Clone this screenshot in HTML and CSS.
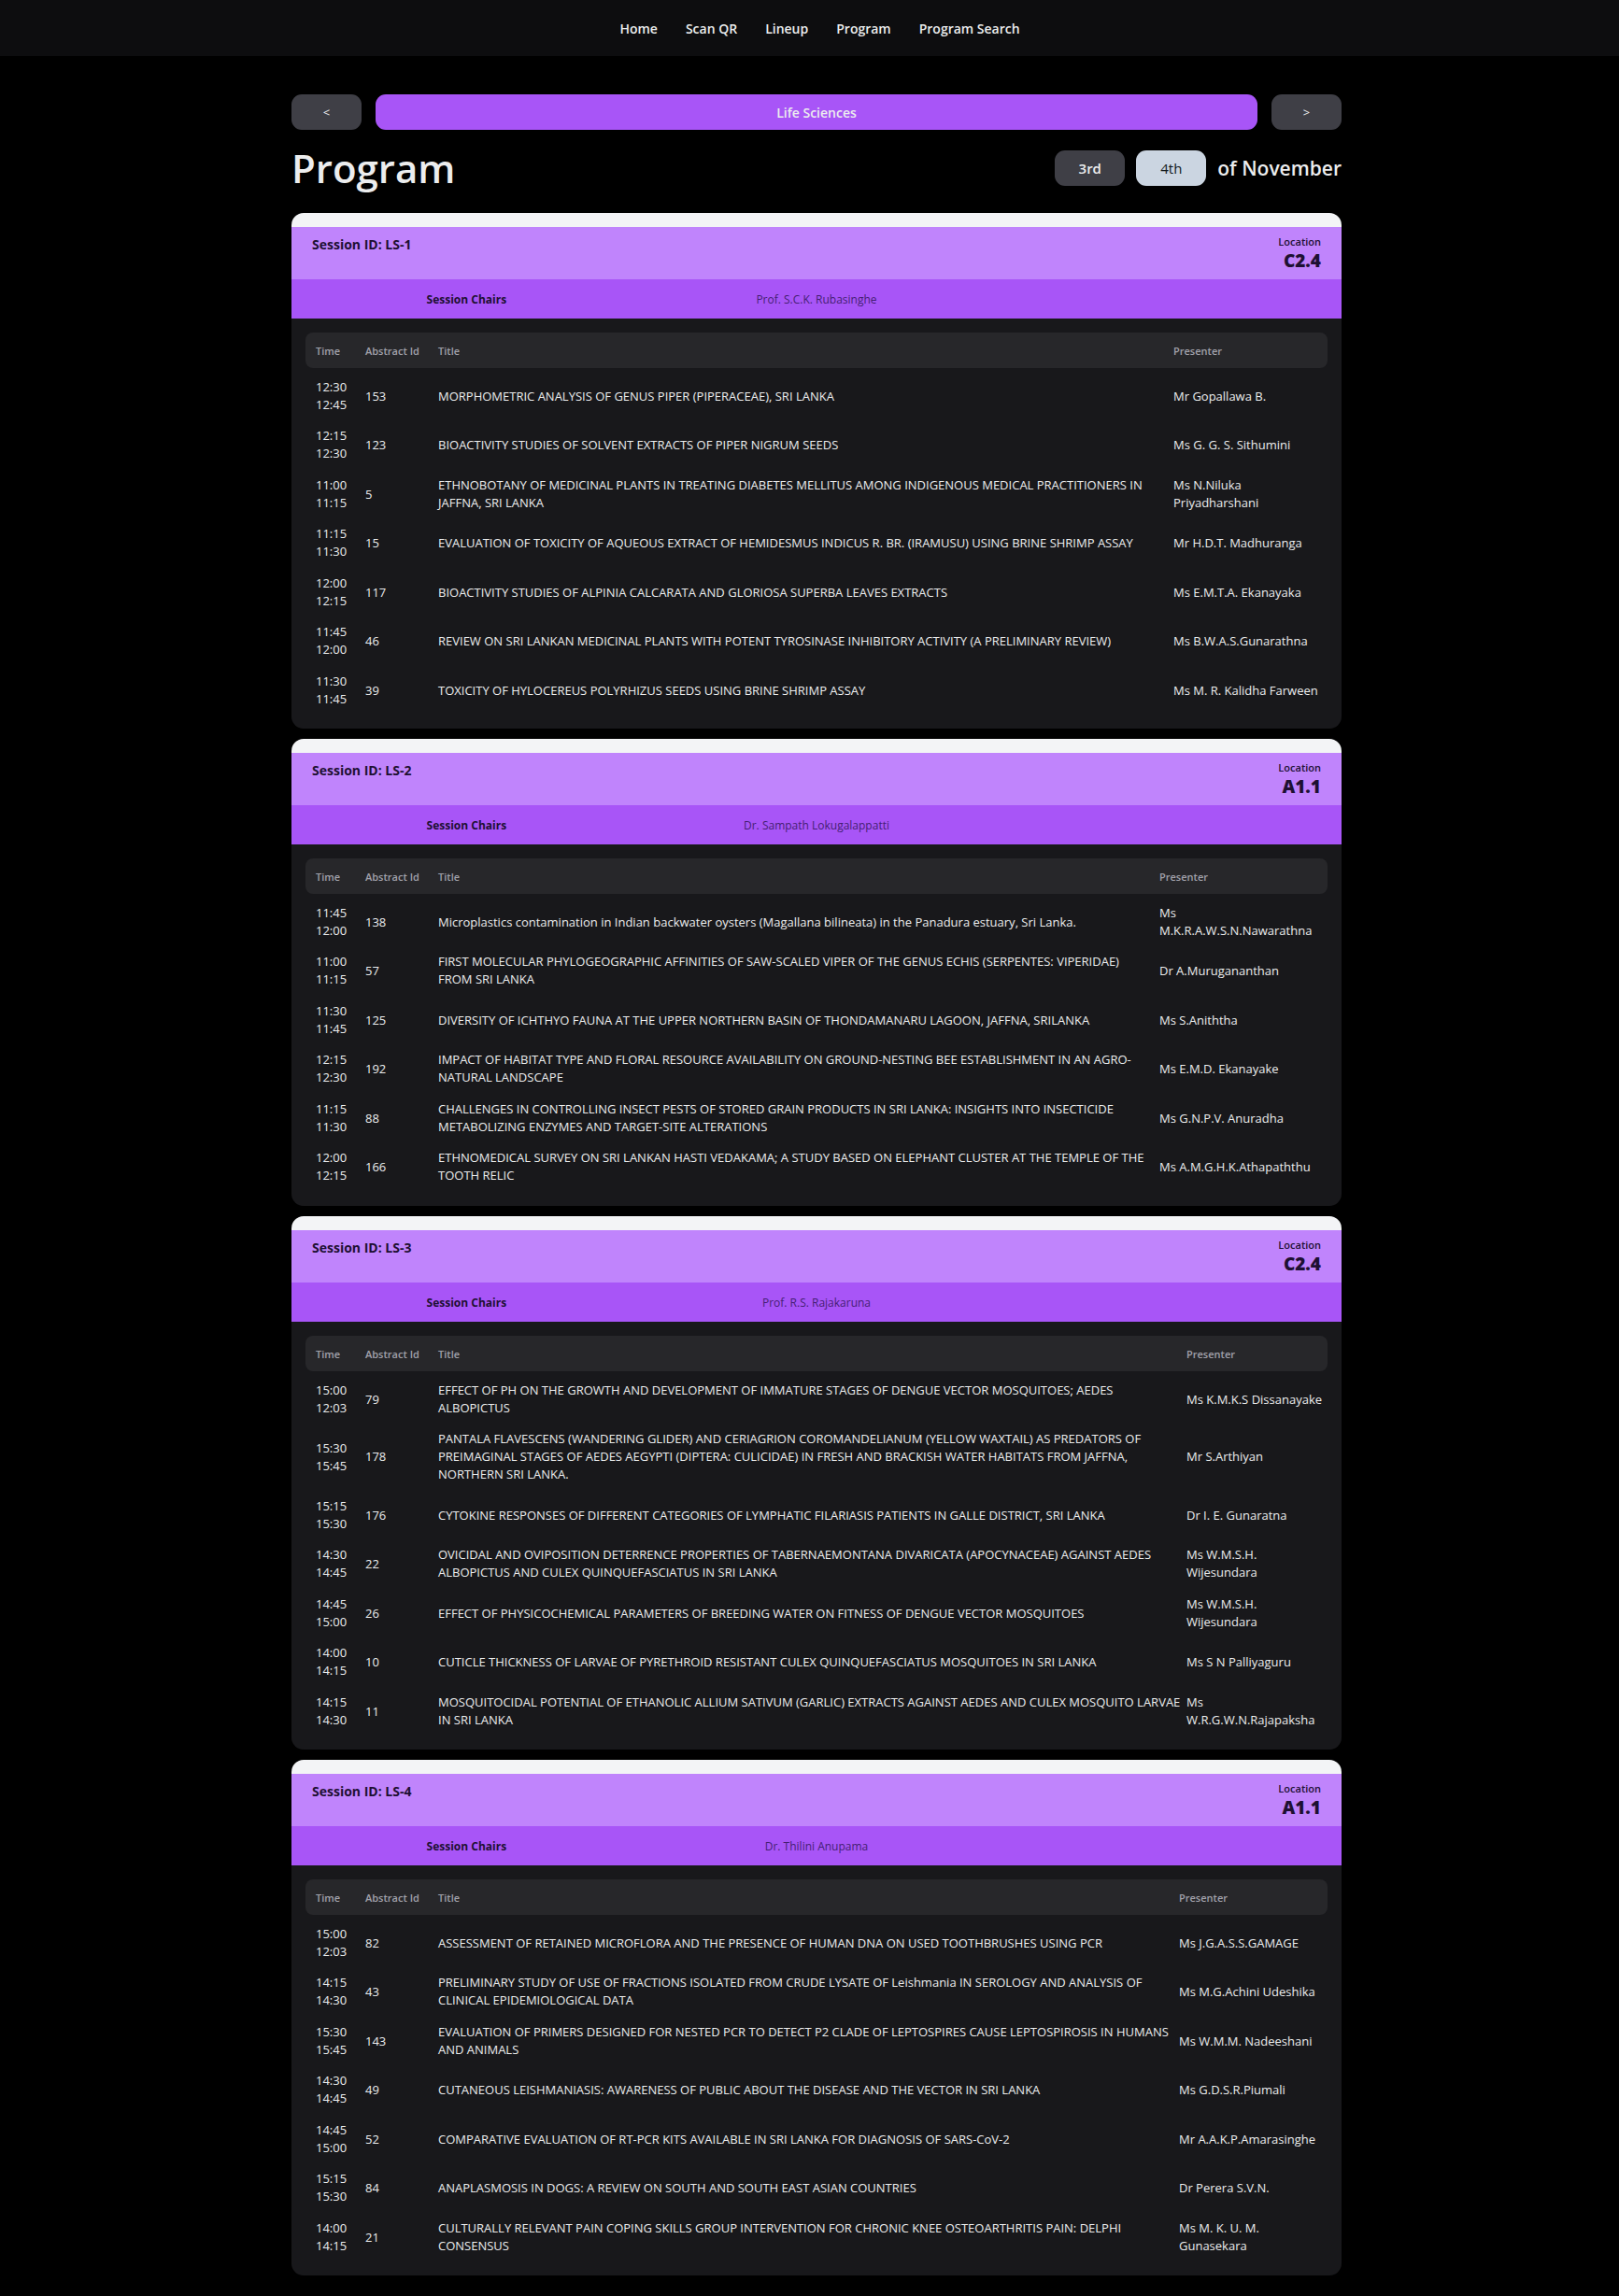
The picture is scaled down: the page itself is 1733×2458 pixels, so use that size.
FILE: index.html
```html
<!DOCTYPE html>
<html lang="en">
<head>
<meta charset="utf-8">
<title>Program</title>
<meta name="viewport" content="width=device-width, initial-scale=1">
<link rel="stylesheet" href="styles.css">
</head>
<body>
<nav class="nav">
  <a href="#">Home</a>
  <a href="#">Scan QR</a>
  <a href="#">Lineup</a>
  <a href="#">Program</a>
  <a href="#">Program Search</a>
</nav>
<main class="page">
  <div class="tracks">
    <button class="btn" type="button" aria-label="Previous track">&lt;</button>
    <button class="btn btn-track" type="button">Life Sciences</button>
    <button class="btn" type="button" aria-label="Next track">&gt;</button>
  </div>
  <header class="heading">
    <h1>Program</h1>
    <div class="days">
      <button class="btn btn-day" type="button">3rd</button>
      <button class="btn btn-day is-active" type="button">4th</button>
      <span class="month">of November</span>
    </div>
  </header>

  <section class="session">
    <div class="session-top">
      <h2>Session ID: LS-1</h2>
      <div class="location"><span>Location</span><strong>C2.4</strong></div>
    </div>
    <div class="chairs"><strong>Session Chairs</strong><span>Prof. S.C.K. Rubasinghe</span></div>
    <div class="session-body">
      <table class="talks talks-ls1">
        <colgroup><col class="col-time"><col class="col-id"><col><col class="col-presenter"></colgroup>
        <thead><tr><th>Time</th><th>Abstract Id</th><th>Title</th><th>Presenter</th></tr></thead>
        <tbody>
          <tr><td>12:30<br>12:45</td><td>153</td><td>MORPHOMETRIC ANALYSIS OF GENUS PIPER (PIPERACEAE), SRI LANKA</td><td>Mr Gopallawa B.</td></tr>
          <tr><td>12:15<br>12:30</td><td>123</td><td>BIOACTIVITY STUDIES OF SOLVENT EXTRACTS OF PIPER NIGRUM SEEDS</td><td>Ms G. G. S. Sithumini</td></tr>
          <tr><td>11:00<br>11:15</td><td>5</td><td>ETHNOBOTANY OF MEDICINAL PLANTS IN TREATING DIABETES MELLITUS AMONG INDIGENOUS MEDICAL PRACTITIONERS IN<br>JAFFNA, SRI LANKA</td><td>Ms N.Niluka<br>Priyadharshani</td></tr>
          <tr><td>11:15<br>11:30</td><td>15</td><td>EVALUATION OF TOXICITY OF AQUEOUS EXTRACT OF HEMIDESMUS INDICUS R. BR. (IRAMUSU) USING BRINE SHRIMP ASSAY</td><td>Mr H.D.T. Madhuranga</td></tr>
          <tr><td>12:00<br>12:15</td><td>117</td><td>BIOACTIVITY STUDIES OF ALPINIA CALCARATA AND GLORIOSA SUPERBA LEAVES EXTRACTS</td><td>Ms E.M.T.A. Ekanayaka</td></tr>
          <tr><td>11:45<br>12:00</td><td>46</td><td>REVIEW ON SRI LANKAN MEDICINAL PLANTS WITH POTENT TYROSINASE INHIBITORY ACTIVITY (A PRELIMINARY REVIEW)</td><td>Ms B.W.A.S.Gunarathna</td></tr>
          <tr><td>11:30<br>11:45</td><td>39</td><td>TOXICITY OF HYLOCEREUS POLYRHIZUS SEEDS USING BRINE SHRIMP ASSAY</td><td>Ms M. R. Kalidha Farween</td></tr>
        </tbody>
      </table>
    </div>
  </section>

  <section class="session">
    <div class="session-top">
      <h2>Session ID: LS-2</h2>
      <div class="location"><span>Location</span><strong>A1.1</strong></div>
    </div>
    <div class="chairs"><strong>Session Chairs</strong><span>Dr. Sampath Lokugalappatti</span></div>
    <div class="session-body">
      <table class="talks talks-ls2">
        <colgroup><col class="col-time"><col class="col-id"><col><col class="col-presenter"></colgroup>
        <thead><tr><th>Time</th><th>Abstract Id</th><th>Title</th><th>Presenter</th></tr></thead>
        <tbody>
          <tr><td>11:45<br>12:00</td><td>138</td><td>Microplastics contamination in Indian backwater oysters (Magallana bilineata) in the Panadura estuary, Sri Lanka.</td><td>Ms<br>M.K.R.A.W.S.N.Nawarathna</td></tr>
          <tr><td>11:00<br>11:15</td><td>57</td><td>FIRST MOLECULAR PHYLOGEOGRAPHIC AFFINITIES OF SAW-SCALED VIPER OF THE GENUS ECHIS (SERPENTES: VIPERIDAE)<br>FROM SRI LANKA</td><td>Dr A.Murugananthan</td></tr>
          <tr><td>11:30<br>11:45</td><td>125</td><td>DIVERSITY OF ICHTHYO FAUNA AT THE UPPER NORTHERN BASIN OF THONDAMANARU LAGOON, JAFFNA, SRILANKA</td><td>Ms S.Aniththa</td></tr>
          <tr><td>12:15<br>12:30</td><td>192</td><td>IMPACT OF HABITAT TYPE AND FLORAL RESOURCE AVAILABILITY ON GROUND-NESTING BEE ESTABLISHMENT IN AN AGRO-<br>NATURAL LANDSCAPE</td><td>Ms E.M.D. Ekanayake</td></tr>
          <tr><td>11:15<br>11:30</td><td>88</td><td>CHALLENGES IN CONTROLLING INSECT PESTS OF STORED GRAIN PRODUCTS IN SRI LANKA: INSIGHTS INTO INSECTICIDE<br>METABOLIZING ENZYMES AND TARGET-SITE ALTERATIONS</td><td>Ms G.N.P.V. Anuradha</td></tr>
          <tr><td>12:00<br>12:15</td><td>166</td><td>ETHNOMEDICAL SURVEY ON SRI LANKAN HASTI VEDAKAMA; A STUDY BASED ON ELEPHANT CLUSTER AT THE TEMPLE OF THE<br>TOOTH RELIC</td><td>Ms A.M.G.H.K.Athapaththu</td></tr>
        </tbody>
      </table>
    </div>
  </section>

  <section class="session">
    <div class="session-top">
      <h2>Session ID: LS-3</h2>
      <div class="location"><span>Location</span><strong>C2.4</strong></div>
    </div>
    <div class="chairs"><strong>Session Chairs</strong><span>Prof. R.S. Rajakaruna</span></div>
    <div class="session-body">
      <table class="talks talks-ls3">
        <colgroup><col class="col-time"><col class="col-id"><col><col class="col-presenter"></colgroup>
        <thead><tr><th>Time</th><th>Abstract Id</th><th>Title</th><th>Presenter</th></tr></thead>
        <tbody>
          <tr><td>15:00<br>12:03</td><td>79</td><td>EFFECT OF PH ON THE GROWTH AND DEVELOPMENT OF IMMATURE STAGES OF DENGUE VECTOR MOSQUITOES; AEDES<br>ALBOPICTUS</td><td>Ms K.M.K.S Dissanayake</td></tr>
          <tr><td>15:30<br>15:45</td><td>178</td><td>PANTALA FLAVESCENS (WANDERING GLIDER) AND CERIAGRION COROMANDELIANUM (YELLOW WAXTAIL) AS PREDATORS OF<br>PREIMAGINAL STAGES OF AEDES AEGYPTI (DIPTERA: CULICIDAE) IN FRESH AND BRACKISH WATER HABITATS FROM JAFFNA,<br>NORTHERN SRI LANKA.</td><td>Mr S.Arthiyan</td></tr>
          <tr><td>15:15<br>15:30</td><td>176</td><td>CYTOKINE RESPONSES OF DIFFERENT CATEGORIES OF LYMPHATIC FILARIASIS PATIENTS IN GALLE DISTRICT, SRI LANKA</td><td>Dr I. E. Gunaratna</td></tr>
          <tr><td>14:30<br>14:45</td><td>22</td><td>OVICIDAL AND OVIPOSITION DETERRENCE PROPERTIES OF TABERNAEMONTANA DIVARICATA (APOCYNACEAE) AGAINST AEDES<br>ALBOPICTUS AND CULEX QUINQUEFASCIATUS IN SRI LANKA</td><td>Ms W.M.S.H.<br>Wijesundara</td></tr>
          <tr><td>14:45<br>15:00</td><td>26</td><td>EFFECT OF PHYSICOCHEMICAL PARAMETERS OF BREEDING WATER ON FITNESS OF DENGUE VECTOR MOSQUITOES</td><td>Ms W.M.S.H.<br>Wijesundara</td></tr>
          <tr><td>14:00<br>14:15</td><td>10</td><td>CUTICLE THICKNESS OF LARVAE OF PYRETHROID RESISTANT CULEX QUINQUEFASCIATUS MOSQUITOES IN SRI LANKA</td><td>Ms S N Palliyaguru</td></tr>
          <tr><td>14:15<br>14:30</td><td>11</td><td>MOSQUITOCIDAL POTENTIAL OF ETHANOLIC ALLIUM SATIVUM (GARLIC) EXTRACTS AGAINST AEDES AND CULEX MOSQUITO LARVAE<br>IN SRI LANKA</td><td>Ms<br>W.R.G.W.N.Rajapaksha</td></tr>
        </tbody>
      </table>
    </div>
  </section>

  <section class="session">
    <div class="session-top">
      <h2>Session ID: LS-4</h2>
      <div class="location"><span>Location</span><strong>A1.1</strong></div>
    </div>
    <div class="chairs"><strong>Session Chairs</strong><span>Dr. Thilini Anupama</span></div>
    <div class="session-body">
      <table class="talks talks-ls4">
        <colgroup><col class="col-time"><col class="col-id"><col><col class="col-presenter"></colgroup>
        <thead><tr><th>Time</th><th>Abstract Id</th><th>Title</th><th>Presenter</th></tr></thead>
        <tbody>
          <tr><td>15:00<br>12:03</td><td>82</td><td>ASSESSMENT OF RETAINED MICROFLORA AND THE PRESENCE OF HUMAN DNA ON USED TOOTHBRUSHES USING PCR</td><td>Ms J.G.A.S.S.GAMAGE</td></tr>
          <tr><td>14:15<br>14:30</td><td>43</td><td>PRELIMINARY STUDY OF USE OF FRACTIONS ISOLATED FROM CRUDE LYSATE OF Leishmania IN SEROLOGY AND ANALYSIS OF<br>CLINICAL EPIDEMIOLOGICAL DATA</td><td>Ms M.G.Achini Udeshika</td></tr>
          <tr><td>15:30<br>15:45</td><td>143</td><td>EVALUATION OF PRIMERS DESIGNED FOR NESTED PCR TO DETECT P2 CLADE OF LEPTOSPIRES CAUSE LEPTOSPIROSIS IN HUMANS<br>AND ANIMALS</td><td>Ms W.M.M. Nadeeshani</td></tr>
          <tr><td>14:30<br>14:45</td><td>49</td><td>CUTANEOUS LEISHMANIASIS: AWARENESS OF PUBLIC ABOUT THE DISEASE AND THE VECTOR IN SRI LANKA</td><td>Ms G.D.S.R.Piumali</td></tr>
          <tr><td>14:45<br>15:00</td><td>52</td><td>COMPARATIVE EVALUATION OF RT-PCR KITS AVAILABLE IN SRI LANKA FOR DIAGNOSIS OF SARS-CoV-2</td><td>Mr A.A.K.P.Amarasinghe</td></tr>
          <tr><td>15:15<br>15:30</td><td>84</td><td>ANAPLASMOSIS IN DOGS: A REVIEW ON SOUTH AND SOUTH EAST ASIAN COUNTRIES</td><td>Dr Perera S.V.N.</td></tr>
          <tr><td>14:00<br>14:15</td><td>21</td><td>CULTURALLY RELEVANT PAIN COPING SKILLS GROUP INTERVENTION FOR CHRONIC KNEE OSTEOARTHRITIS PAIN: DELPHI<br>CONSENSUS</td><td>Ms M. K. U. M.<br>Gunasekara</td></tr>
        </tbody>
      </table>
    </div>
  </section>
</main>
</body>
</html>
```
FILE: styles.css
```css
* { box-sizing: border-box; }

body {
  margin: 0;
  background: #000;
  color: #ecedee;
  font-family: "Open Sans", "Noto Sans", sans-serif;
  font-size: 13px;
  line-height: 19px;
}

.nav {
  display: flex;
  justify-content: center;
  align-items: center;
  gap: 30px;
  height: 60px;
  padding-left: 22px;
  background: #0d0d0f;
}

.nav a {
  color: #ecedee;
  font-size: 14px;
  font-weight: 600;
  text-decoration: none;
}

.page {
  max-width: 1139px;
  margin: 0 auto;
  padding: 41px 0 11px 15px;
}

.tracks {
  display: flex;
  gap: 15px;
}

.btn {
  width: 75px;
  height: 38px;
  border: 0;
  border-radius: 11px;
  background: #3f3f46;
  color: #ecedee;
  font: inherit;
  cursor: pointer;
}

.btn-track {
  flex: 1;
  background: #a855f7;
  font-size: 14px;
  font-weight: 600;
}

.heading {
  display: flex;
  justify-content: space-between;
  align-items: center;
  height: 89px;
  padding-bottom: 7px;
}

h1 {
  margin: 0;
  font-size: 42px;
  font-weight: 600;
  line-height: 60px;
}

.days {
  display: flex;
  align-items: center;
  gap: 12px;
}

.btn-day {
  font-size: 15px;
  font-weight: 600;
}

.btn-day.is-active {
  background: #cbd5e1;
  color: #11181c;
  font-weight: 400;
}

.month {
  font-size: 21px;
  font-weight: 600;
  line-height: 38px;
}

.session {
  overflow: hidden;
  margin-bottom: 11px;
  padding-top: 15px;
  border-radius: 13px;
  background: linear-gradient(#f3f4f6 15px, #18181b 15px);
}

.session-top {
  display: flex;
  justify-content: space-between;
  height: 56px;
  padding: 7px 22px;
  background: #c084fc;
  color: #1e1033;
}

h2 {
  margin: 0;
  font-size: 14px;
  font-weight: 700;
  line-height: 24px;
}

.location {
  display: flex;
  flex-direction: column;
  align-items: flex-end;
}

.location span {
  font-size: 11px;
  font-weight: 600;
  line-height: 17px;
}

.location strong {
  font-size: 19px;
  font-weight: 800;
  line-height: 25px;
}

.chairs {
  display: grid;
  grid-template-columns: repeat(3, 1fr);
  align-items: center;
  height: 42px;
  background: #a855f7;
  color: #1e1033;
  font-size: 12px;
  text-align: center;
}

.chairs strong { font-weight: 700; }

.chairs span { color: #451f73; }

.session-body { padding: 15px; }

.talks {
  width: 100%;
  table-layout: fixed;
  border-collapse: separate;
  border-spacing: 0;
  white-space: nowrap;
}

.talks thead::after {
  content: "";
  display: block;
  height: 4px;
}

.talks th {
  height: 38px;
  padding: 0 11px;
  background: #27272a;
  color: #a1a1aa;
  font-size: 11px;
  font-weight: 600;
  text-align: left;
}

.talks th:first-child { border-radius: 8px 0 0 8px; }
.talks th:last-child { border-radius: 0 8px 8px 0; }

.talks td {
  padding: 7px 11px;
  vertical-align: middle;
}

.talks tr:nth-child(even) td { padding-bottom: 8px; }

.col-time { width: 53px; }
.col-id { width: 78px; }
.talks-ls1 .col-presenter { width: 176px; }
.talks-ls2 .col-presenter { width: 191px; }
.talks-ls3 .col-presenter { width: 162px; }
.talks-ls4 .col-presenter { width: 170px; }
```
